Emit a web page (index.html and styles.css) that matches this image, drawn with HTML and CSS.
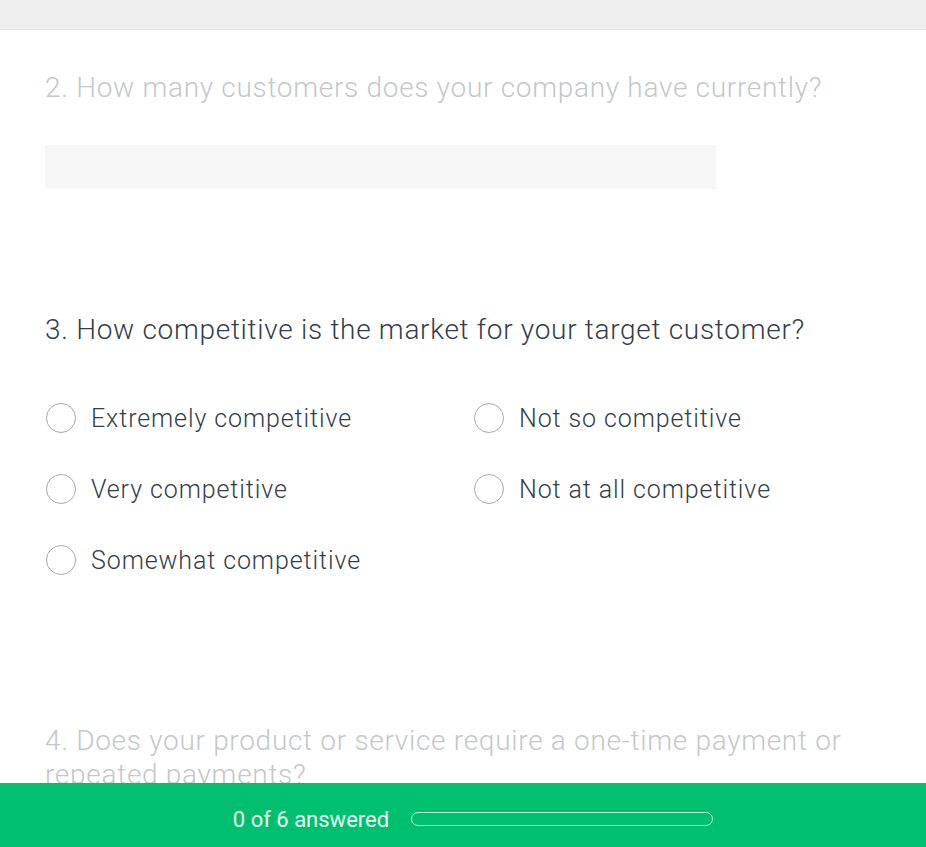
FILE: index.html
```html
<!DOCTYPE html>
<html lang="en">
<head>
    <meta charset="UTF-8">
    <meta name="viewport" content="width=device-width, initial-scale=1.0">
    <title>Survey</title>
    <link rel="stylesheet" href="styles.css">
</head>
<body>

<div class="topbar"></div>

<div class="survey">
    <div class="question faded">
        <h2 class="question-title">2. How many customers does your company have currently?</h2>
        <div class="text-input"></div>
    </div>

    <div class="question active">
        <h2 class="question-title">3. How competitive is the market for your target customer?</h2>
        <div class="choices">
            <label class="choice"><span class="radio"></span>Extremely competitive</label>
            <label class="choice"><span class="radio"></span>Not so competitive</label>
            <label class="choice"><span class="radio"></span>Very competitive</label>
            <label class="choice"><span class="radio"></span>Not at all competitive</label>
            <label class="choice"><span class="radio"></span>Somewhat competitive</label>
        </div>
    </div>

    <div class="question faded">
        <h2 class="question-title">4. Does your product or service require a one-time payment or repeated payments?</h2>
    </div>
</div>

<footer class="progress">
    <span class="progress-text">0 of 6 answered</span>
    <span class="progress-bar"></span>
</footer>

</body>
</html>
```

FILE: styles.css
```css
body {
    font-family: Roboto, "Liberation Sans", sans-serif;
    margin: 0;
    padding: 0;
    background-color: #ffffff;
    height: 847px;
    overflow: hidden;
}
.topbar {
    height: 29px;
    background: #efefef;
    border-bottom: 1px solid #e6e6e6;
}
.survey {
    padding: 0 45px;
}
.question-title {
    font-size: 28px;
    font-weight: 300;
    letter-spacing: 0.7px;
    line-height: 34px;
    max-width: 812px;
    margin: 0;
    color: #333e48;
}
.faded .question-title {
    color: #c5c7c9;
}
.question:first-child {
    padding-top: 41px;
}
.text-input {
    width: 671px;
    height: 44px;
    background: #f7f7f7;
    margin-top: 40px;
}
.active {
    margin-top: 124px;
}
.choices {
    display: grid;
    grid-template-columns: 428px 1fr;
    row-gap: 41px;
    margin-top: 56px;
}
.choice {
    display: flex;
    align-items: center;
    height: 30px;
    font-size: 25px;
    font-weight: 300;
    letter-spacing: 0.9px;
    color: #333e48;
    cursor: pointer;
}
.radio {
    width: 28px;
    height: 28px;
    border: 1px solid #a9a9a9;
    border-radius: 50%;
    margin-left: 1px;
    margin-right: 15px;
    flex-shrink: 0;
}
.question:last-child {
    margin-top: 149px;
}
.progress {
    position: fixed;
    left: 0;
    right: 0;
    bottom: 0;
    box-sizing: border-box;
    height: 64px;
    padding: 8px 0 0 20px;
    background: #00bf6f;
    display: flex;
    align-items: center;
    justify-content: center;
}
.progress-text {
    color: #eafff4;
    font-size: 22px;
    margin-right: 22px;
}
.progress-bar {
    width: 300px;
    height: 12px;
    border: 1px solid #b8f5d6;
    border-radius: 8px;
}
```
